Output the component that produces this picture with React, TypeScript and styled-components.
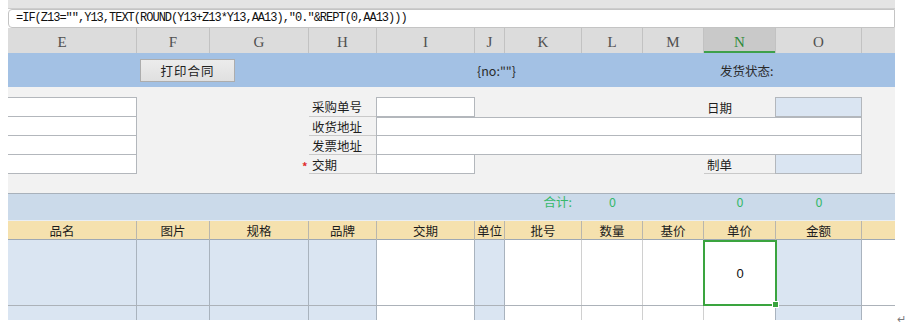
import styled, { createGlobalStyle } from 'styled-components';

const COLS = '129px 73px 99px 68px 98px 30px 77px 61px 61px 72px 86px 33px';
const CJK = '"Noto Sans CJK SC", "Microsoft YaHei", sans-serif';

const GlobalStyle = createGlobalStyle`
    html, body {
        margin: 0;
        background: #ffffff;
    }
    body {
        font-family: ${CJK};
    }
`;

const Page = styled.div`
    display: flex;
    align-items: flex-end;
    height: 336px;
    padding-left: 8px;
    box-sizing: border-box;
`;

const Sheet = styled.div`
    width: 887px;
    align-self: flex-start;
    display: flex;
    flex-direction: column;
`;

const ReturnMark = styled.span`
    font-size: 11px;
    color: #7a7a7a;
    margin: 0 0 12px 2px;
    line-height: 1;
`;

const TopStrip = styled.div`
    height: 8px;
    background: #e4e4e4;
    border-bottom: 1px solid #cdcdcd;
`;

const FormulaBar = styled.div`
    height: 19px;
    box-sizing: border-box;
    background: #ffffff;
    border: 1px solid #c4c4c4;
    border-radius: 4px 0 0 4px;
    padding-left: 7px;
    font-family: "Liberation Mono", monospace;
    font-size: 12px;
    letter-spacing: -1px;
    line-height: 17px;
    color: #111;
    white-space: nowrap;
`;

const Grid = styled.div`
    display: grid;
    grid-template-columns: ${COLS};
`;

const ColHeader = styled(Grid)`
    height: 25px;
    background: #dcdcdc;
`;

const ColCell = styled.div<{ $active?: boolean; $shift?: number }>`
    display: flex;
    align-items: flex-end;
    justify-content: center;
    padding: 0 ${(p) => p.$shift || 0}px 2px 0;
    border-right: 1px solid #c2c2c2;
    font-family: "Liberation Serif", serif;
    font-size: 15px;
    color: ${(p) => (p.$active ? '#2f8a3a' : '#505050')};
    background: ${(p) => (p.$active ? '#c9c9c9' : 'transparent')};
    box-shadow: ${(p) => (p.$active ? 'inset 0 -2px 0 #3ea04a' : 'none')};
    &:last-child {
        border-right: none;
    }
`;

const TitleBand = styled(Grid)`
    height: 34px;
    background: #a3c1e4;
    align-items: center;
`;

const PrintButton = styled.button<{ $col: string }>`
    grid-column: ${(p) => p.$col};
    justify-self: start;
    margin-left: 3px;
    width: 95px;
    height: 23px;
    background: linear-gradient(#ececec, #e0e0e0);
    border: 1px solid #adadad;
    border-radius: 0;
    font-family: ${CJK};
    font-size: 12.5px;
    letter-spacing: 1px;
    color: #222;
    padding: 0;
`;

const BandText = styled.span<{ $col: string; $pad: number }>`
    grid-column: ${(p) => p.$col};
    padding-left: ${(p) => p.$pad}px;
    font-size: 12.5px;
    color: #2a2a2a;
    white-space: nowrap;
`;

const FormArea = styled(Grid)`
    background: #f2f2f2;
    padding: 10px 0 19px;
    grid-template-rows: 20px 19px 19px 19px;
`;

const Field = styled.div<{ $col: string; $row: number; $top?: boolean; $blue?: boolean; $open?: boolean }>`
    grid-column: ${(p) => p.$col};
    grid-row: ${(p) => p.$row};
    background: ${(p) => (p.$blue ? '#dae5f2' : '#ffffff')};
    border: 1px solid #b3b7bc;
    border-top-width: ${(p) => (p.$top ? 1 : 0)}px;
    border-left-width: ${(p) => (p.$open ? 0 : 1)}px;
    margin-left: ${(p) => (p.$open ? 0 : -1)}px;
`;

const FieldLabel = styled.div<{ $col: string; $row: number; $line?: boolean }>`
    grid-column: ${(p) => p.$col};
    grid-row: ${(p) => p.$row};
    display: flex;
    align-items: center;
    padding-left: 3px;
    font-size: 12.5px;
    color: #1e1e1e;
    border-bottom: ${(p) => (p.$line ? '1px solid #c9c9c9' : 'none')};
    white-space: nowrap;
`;

const Star = styled.span<{ $row: number }>`
    grid-column: 4;
    grid-row: ${(p) => p.$row};
    justify-self: start;
    margin-left: -7px;
    padding-top: 3px;
    font-size: 11px;
    font-weight: bold;
    color: #e02b2b;
`;

const SummaryRow = styled(Grid)`
    height: 27px;
    background: #cbdaea;
    border-top: 1px solid #a8b1bb;
    box-sizing: border-box;
    align-items: start;
`;

const SumText = styled.span<{ $col: number; $right?: boolean }>`
    grid-column: ${(p) => p.$col};
    text-align: ${(p) => (p.$right ? 'right' : 'center')};
    padding-right: ${(p) => (p.$right ? 10 : 0)}px;
    line-height: 16px;
    font-size: 12.5px;
    color: #36b86a;
`;

const HeadRow = styled(Grid)`
    height: 20px;
    background: #f5e1ae;
    border-top: 1px solid #e9eef4;
    border-bottom: 1px solid #9da8b4;
    box-sizing: border-box;
`;

const HeadCell = styled.div<{ $shift?: number }>`
    display: flex;
    align-items: center;
    justify-content: center;
    padding-right: ${(p) => p.$shift || 0}px;
    border-right: 1px solid #b9b6ad;
    font-size: 12.5px;
    color: #1c1c1c;
    &:last-child {
        border-right: none;
    }
`;

const DataRow = styled(Grid)<{ $h: number; $ruled?: boolean }>`
    height: ${(p) => p.$h}px;
    border-bottom: ${(p) => (p.$ruled ? '1px solid #acb2b9' : 'none')};
`;

const DataCell = styled.div<{ $blue?: boolean; $edge?: string }>`
    background: ${(p) => (p.$blue ? '#dae5f2' : '#ffffff')};
    border-right: 1px solid ${(p) => p.$edge || '#d2d2d2'};
    &:last-child {
        border-right: none;
    }
`;

const SelectedCell = styled.div`
    position: relative;
    display: flex;
    align-items: center;
    justify-content: center;
    margin: 0 -1px -1px -1px;
    border: 2px solid #3aa43f;
    background: #ffffff;
    font-family: "Liberation Sans", sans-serif;
    font-size: 13px;
    color: #111;
`;

const FillHandle = styled.span`
    position: absolute;
    right: -4px;
    bottom: -4px;
    width: 5px;
    height: 5px;
    background: #3aa43f;
    border: 1px solid #ffffff;
`;

const letters = [
    { l: 'E', shift: 20 },
    { l: 'F' },
    { l: 'G' },
    { l: 'H' },
    { l: 'I' },
    { l: 'J' },
    { l: 'K' },
    { l: 'L' },
    { l: 'M' },
    { l: 'N', active: true },
    { l: 'O' },
    { l: '' },
];

const heads = ['品名', '图片', '规格', '品牌', '交期', '单位', '批号', '数量', '基价', '单价', '金额', ''];

// which columns of the item rows are tinted blue
const tones = [true, true, true, true, false, true, false, false, false, false, true, false];

function Row({ h, selected, ruled }: { h: number; selected?: boolean; ruled?: boolean }) {
    return (
        <DataRow $h={h} $ruled={ruled}>
            {tones.map((blue, i) => {
                if (i === 9 && selected) {
                    return (
                        <SelectedCell key={i}>
                            0
                            <FillHandle />
                        </SelectedCell>
                    );
                }
                const next = tones[i + 1];
                const edge = blue || next ? '#a9b3be' : '#d0d0d0';
                return <DataCell key={i} $blue={blue} $edge={edge} />;
            })}
        </DataRow>
    );
}

export default function App() {
    return (
        <>
            <GlobalStyle />
            <Page>
                <Sheet>
                    <TopStrip />
                    <FormulaBar>=IF(Z13="",Y13,TEXT(ROUND(Y13+Z13*Y13,AA13),"0."&amp;REPT(0,AA13)))</FormulaBar>

                    <ColHeader>
                        {letters.map((c, i) => (
                            <ColCell key={i} $active={c.active} $shift={c.shift}>
                                {c.l}
                            </ColCell>
                        ))}
                    </ColHeader>

                    <TitleBand>
                        <PrintButton $col="2 / span 2">打印合同</PrintButton>
                        <BandText $col="6 / span 2" $pad={2}>
                            {'{no:""}'}
                        </BandText>
                        <BandText $col="10 / span 2" $pad={16}>
                            发货状态:
                        </BandText>
                    </TitleBand>

                    <FormArea>
                        <Field $col="1" $row={1} $top $open />
                        <Field $col="1" $row={2} $open />
                        <Field $col="1" $row={3} $open />
                        <Field $col="1" $row={4} $open />

                        <FieldLabel $col="4" $row={1} $line>采购单号</FieldLabel>
                        <FieldLabel $col="4" $row={2} $line>收货地址</FieldLabel>
                        <FieldLabel $col="4" $row={3} $line>发票地址</FieldLabel>
                        <Star $row={4}>*</Star>
                        <FieldLabel $col="4" $row={4} $line>交期</FieldLabel>

                        <Field $col="5" $row={1} $top />
                        <Field $col="5 / span 7" $row={2} $top />
                        <Field $col="5 / span 7" $row={3} />
                        <Field $col="5" $row={4} />

                        <FieldLabel $col="10" $row={1}>日期</FieldLabel>
                        <FieldLabel $col="10" $row={4} $line>制单</FieldLabel>
                        <Field $col="11" $row={1} $top $blue />
                        <Field $col="11" $row={4} $blue />
                    </FormArea>

                    <SummaryRow>
                        <SumText $col={7} $right>
                            合计:
                        </SumText>
                        <SumText $col={8}>0</SumText>
                        <SumText $col={10}>0</SumText>
                        <SumText $col={11}>0</SumText>
                    </SummaryRow>

                    <HeadRow>
                        {heads.map((h, i) => (
                            <HeadCell key={i} $shift={i === 0 ? 20 : 0}>
                                {h}
                            </HeadCell>
                        ))}
                    </HeadRow>

                    <Row h={65} selected ruled />
                    <Row h={14} />
                </Sheet>
                <ReturnMark>↵</ReturnMark>
            </Page>
        </>
    );
}
